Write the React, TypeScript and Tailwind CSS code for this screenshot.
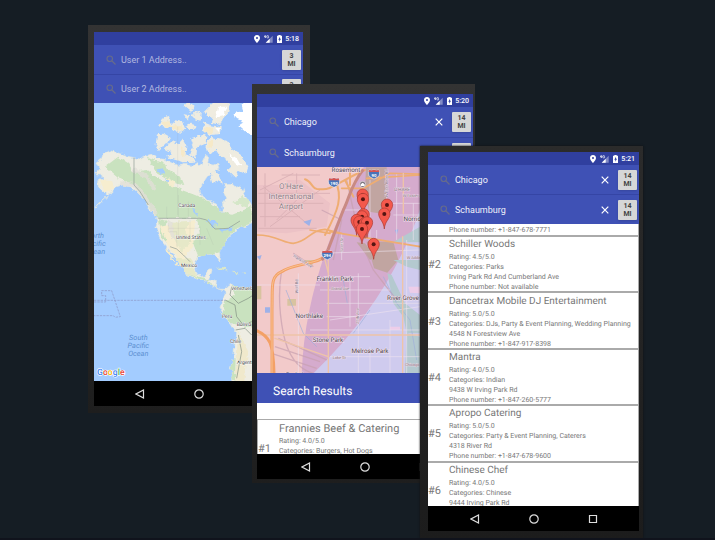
import React from "react";

type Place = { rank: number; name: string; lines: string[] };

const frannies: Place = {
  rank: 1,
  name: "Frannies Beef & Catering",
  lines: ["Rating: 4.0/5.0", "Categories: Burgers, Hot Dogs"],
};

const places: Place[] = [
  {
    rank: 2,
    name: "Schiller Woods",
    lines: ["Rating: 4.5/5.0", "Categories: Parks", "Irving Park Rd And Cumberland Ave", "Phone number: Not available"],
  },
  {
    rank: 3,
    name: "Dancetrax Mobile DJ Entertainment",
    lines: [
      "Rating: 5.0/5.0",
      "Categories: DJs, Party & Event Planning, Wedding Planning",
      "4548 N Forestview Ave",
      "Phone number: +1-847-917-8398",
    ],
  },
  {
    rank: 4,
    name: "Mantra",
    lines: ["Rating: 4.0/5.0", "Categories: Indian", "9438 W Irving Park Rd", "Phone number: +1-847-260-5777"],
  },
  {
    rank: 5,
    name: "Apropo Catering",
    lines: [
      "Rating: 5.0/5.0",
      "Categories: Party & Event Planning, Caterers",
      "4318 River Rd",
      "Phone number: +1-847-678-9600",
    ],
  },
  {
    rank: 6,
    name: "Chinese Chef",
    lines: ["Rating: 4.0/5.0", "Categories: Chinese", "9444 Irving Park Rd"],
  },
];

function StatusBar({ time }: { time: string }) {
  return (
    <div className="flex h-[13px] items-center justify-end bg-[#303f9f] pt-px pr-1 text-[7px] font-medium text-white">
      <svg className="mr-1 h-[8px] w-[6px]" viewBox="0 0 12 16" fill="#fff">
        <path fillRule="evenodd" d="M6 0C2.7 0 0 2.6 0 5.8 0 10 6 16 6 16s6-6 6-10.200C12 2.600 9.300 0 6 0Zm0 3.800a2 2 0 1 1 0 4 2 2 0 0 1 0-4Z" />
      </svg>
      <svg className="mr-1 h-[8px] w-[9px]" viewBox="0 0 27 24">
        <path d="M26 2V23H5Z" fill="#fff" opacity=".4" />
        <path d="M17 11V23H5Z" fill="#fff" />
        <path d="M3 1 1 6H6M5 1V9M14 3C12 0 8 1 8 5s4 5 6 3V5H11" fill="none" stroke="#fff" strokeWidth="2" />
      </svg>
      <svg className="mr-[3px] h-[8px] w-[5px]" viewBox="0 0 15 24">
        <path d="M4 2V0h7v2h4v22H0V2Z" fill="#fff" />
        <path d="M9 5 4 14h3v6l5-9H9Z" fill="#303f9f" />
      </svg>
      <span>{time}</span>
    </div>
  );
}

type SearchRowProps = {
  label: string;
  value?: string;
  placeholder?: string;
  miles: number;
  height: string;
  clearable?: boolean;
};

function SearchRow({ label, value = "", placeholder, miles, height, clearable }: SearchRowProps) {
  return (
    <div className={`flex items-center border-t border-[#3545a5] bg-[#3f51b5] pr-[2px] pl-3 first:border-t-0 ${height}`}>
      <svg className="mr-[5px] size-[10px] shrink-0" viewBox="0 0 20 20" fill="none" stroke="#666b8c" strokeWidth="2.400">
        <circle cx="7.500" cy="7.500" r="5.500" />
        <path d="m12 12 7 7" />
      </svg>
      <input
        type="text"
        aria-label={label}
        defaultValue={value}
        placeholder={placeholder}
        className="h-4 min-w-0 flex-1 bg-transparent text-[9px] text-[#f1f2fa] outline-none placeholder:text-[#b3b9e0]"
      />
      {clearable && (
        <button type="button" aria-label={`Clear ${label}`} className="mr-[9px] shrink-0">
          <svg className="size-2" viewBox="0 0 8 8" stroke="#fff" strokeWidth="1.200">
            <path d="m.7.7 6.600 6.600M7.300.7.7 7.300" />
          </svg>
        </button>
      )}
      <button
        type="button"
        className="h-5 w-[19px] shrink-0 rounded-[1px] bg-[#d6d7d7] text-center text-[7px] leading-[8px] font-bold text-[#444] shadow-sm"
      >
        {miles}
        <br />
        MI
      </button>
    </div>
  );
}

function NavBar() {
  return (
    <nav className="flex h-[25px] items-center justify-center gap-[49px] bg-black">
      <button type="button" aria-label="Back">
        <svg className="size-[10px]" viewBox="0 0 10 10" fill="none" stroke="#ddd" strokeWidth="1.200">
          <path d="M8.500 1v8L1 5Z" />
        </svg>
      </button>
      <button type="button" aria-label="Home">
        <svg className="size-[10px]" viewBox="0 0 10 10" fill="none" stroke="#ddd" strokeWidth="1.200">
          <circle cx="5" cy="5" r="4.200" />
        </svg>
      </button>
      <button type="button" aria-label="Recent apps">
        <svg className="size-[10px]" viewBox="0 0 10 10" fill="none" stroke="#ddd" strokeWidth="1.200">
          <path d="M1.500 1.500h7v7h-7Z" />
        </svg>
      </button>
    </nav>
  );
}

function PlaceItem({ place, border, titleSize }: { place: Place; border: string; titleSize: string }) {
  return (
    <li className={`flex items-center overflow-hidden pt-[2px] ${border}`}>
      <span className="w-[21px] shrink-0 text-[11px] leading-[14px]">#{place.rank}</span>
      <div className="h-[54px] min-w-0 whitespace-nowrap">
        <h3 className={`leading-[14px] ${titleSize}`}>{place.name}</h3>
        {place.lines.map((line) => (
          <p key={line} className="text-[7px] leading-[10px]">
            {line}
          </p>
        ))}
      </div>
    </li>
  );
}

const landMass =
  "M33 205 50 190 55 175 75 167 95 172 120 182 148 188 165 192 190 182 205 180 220 190 245 195 262 205 285 212 300 205 320 215 335 205 345 212 352 200 362 178 370 192 368 208 385 210 398 205 402 222 385 232 370 240 355 262 345 285 350 305 375 318 395 328 403 350 415 350 413 325 425 310 418 290 420 266 440 265 455 280 470 272 480 300 495 320 500 335 530 340 530 372 500 385 480 395 470 391 455 405 445 415 425 435 416 455 403 468 405 485 408 500 400 496 388 478 370 478 350 482 336 488 330 510 335 535 350 545 365 540 372 522 381 522 375 545 370 555 394 560 392 575 400 582 420 583 425 575 440 568 455 578 480 575 505 590 530 590 530 900 440 860 442 830 436 820 445 790 450 750 452 712 440 690 420 665 405 640 415 615 420 600 420 588 408 585 395 580 375 565 350 555 325 548 300 535 292 520 278 500 262 475 250 462 245 458 232 440 220 420 213 395 219 375 214 365 200 350 188 335 182 315 165 300 150 285 130 275 112 270 95 275 80 290 60 310 40 325 30 340 52 318 68 302 55 290 40 275 38 260 55 250 50 240 35 240 30 230 47 222Z";

const arcticIslands = [
  "M218 120 235 118 255 130 245 145 230 150 222 165 214 150Z",
  "M240 160 262 140 285 150 292 135 302 155 300 180 318 185 330 198 295 200 270 192 250 185 262 172Z",
  "M225 90 235 70 252 65 248 80 262 88 250 95Z",
  "M258 98 272 78 290 82 298 100 285 112 270 106Z",
  "M318 132 340 125 362 122 360 145 335 155 332 185 318 178 326 155Z",
  "M368 140 380 128 402 132 425 140 440 165 465 180 488 215 482 235 460 225 450 245 430 225 442 215 425 190 405 180 392 160 378 178 366 165Z",
  "M385 230 402 240 410 262 395 255 383 262 378 245Z",
  "M355 105 360 85 375 92 408 98 405 115 375 118Z",
  "M360 50 380 30 398 15 432 28 428 50 412 70 405 88 380 82 385 62 370 65Z",
  "M300 32 310 22 325 38 318 48Z",
  "M322 65 335 50 348 58 345 75 332 72Z",
  "M305 92 318 85 328 98 312 105Z",
  "M300 60 312 62 308 72Z",
];

const greenAreas = [
  "M60 215 100 185 130 205 145 230 185 225 210 245 250 265 290 285 330 300 375 320 405 345 440 360 500 335 500 385 440 405 370 380 340 368 218 370 185 325 150 270 100 250Z",
  "M185 185 235 205 250 225 285 245 295 270 260 262 215 235Z",
  "M222 372 245 378 240 405 260 430 258 455 228 425Z",
  "M335 370 465 390 425 435 408 470 385 478 340 484 322 440 345 415Z",
  "M300 535 355 548 400 580 365 560Z",
  "M440 570 530 590 530 700 480 695 440 685 412 660 420 620 450 600Z",
  "M440 790 452 790 450 860 436 850Z",
];

function WorldMap() {
  return (
    <svg className="block h-[278px] w-full" viewBox="0 0 209 278" preserveAspectRatio="xMinYMin slice" role="img" aria-label="Map of the Americas">
      <defs>
        <clipPath id="land">
          <path d={landMass} />
        </clipPath>
        <filter id="terrain" x="-10%" y="-10%" width="120%" height="120%" colorInterpolationFilters="sRGB">
          <feTurbulence type="fractalNoise" baseFrequency="0.08" numOctaves="2" seed="4" />
          <feDisplacementMap in="SourceGraphic" scale="14" xChannelSelector="R" yChannelSelector="G" />
        </filter>
      </defs>
      <rect width="209" height="278" fill="#a3ccff" />
      <g transform="translate(-9 -8) scale(.3333)" fontFamily="Roboto, 'Liberation Sans', sans-serif">
        <g filter="url(#terrain)">
          <path d={landMass} fill="#eeede3" stroke="#dfe5df" strokeWidth="2" />
          <g clipPath="url(#land)">
            {greenAreas.map((d) => (
              <path key={d} d={d} fill="#c9e2bf" />
            ))}
            <path d="M45 255 80 258 88 280 60 295ZM240 245 272 262 262 278 245 262ZM225 395 330 375 325 450 290 500 250 455Z" fill="#f6edcf" />
            <path d="M260 380 315 378 300 405 320 440 290 470 270 440ZM270 490 320 490 335 545 300 535Z" fill="#e6e8c8" />
            <path d="M105 265 150 270 200 335 215 360M145 225 185 245 210 285M255 380 265 430" fill="none" stroke="#e1dfd7" strokeWidth="13" opacity=".8" />
            <path d="M458 705 490 770 478 860 450 860 456 780Z" fill="#f0e9cc" />
            <path d="M215 225 230 220 245 232 230 240ZM240 250 254 257 246 265ZM318 340 330 343 340 365 328 355ZM362 375 390 375 400 390 388 385 388 400 378 385ZM402 405 430 400 440 392 438 404 410 413Z" fill="#a3ccff" />
          </g>
          {arcticIslands.map((d) => (
            <path key={d} d={d} fill="#efece0" stroke="#efece0" strokeWidth="4" />
          ))}
          <path d="M225 85 250 75 258 92 290 90 295 108 268 104ZM370 140 382 135 380 160 370 162ZM360 98 380 95 384 114 362 113ZM290 155 300 165 298 185 288 176Z" fill="#f6e9c8" />
          <path d="M445 55 475 48 470 30 515 12 530 130 490 118 460 92 478 80 450 70ZM400 35 428 35 410 65 392 66ZM390 98 407 99 404 113ZM432 175 455 190 470 215 450 205Z" fill="#fff" />
          <path d="M243 455 255 472 270 500 284 515 276 513 258 490 246 470Z" fill="#f2ebcd" />
          <path d="M392 520 415 516 432 528 415 524ZM438 530 460 532 455 537ZM475 532 485 533 480 537Z" fill="#dce8c8" />
          <path d="M445 325 470 300 495 320 490 340Z" fill="#d5e7c8" />
        </g>
        <path d="M147 188V270L165 290 190 330M220 370H345L365 375 390 402 430 400 465 378M255 455 275 462 295 480 315 500" fill="none" stroke="#8e9992" strokeWidth="2" />
        <path d="M245 335V370M280 300V370M310 320V370M250 375V410H275V455M280 380V420M315 375V440M250 400H340M275 430H370M345 395V450M365 400 385 450M278 95V360" fill="none" stroke="#8e9992" strokeWidth="1" opacity=".35" />
        <path d="M27 616H420M27 621H62V602H50V587H80L106 665 90 667 85 662H27" fill="none" stroke="#8b94c2" strokeWidth="2" strokeDasharray="7 3" />
        <path d="M440 575 435 600 460 625 490 610 505 600M420 615 450 630 455 665 475 690 500 680M452 705 480 700 500 720M460 720 470 770 455 850" fill="none" stroke="#7f8c80" strokeWidth="2" />
        <g fill="#444" stroke="#fff" strokeWidth="2" paintOrder="stroke" fontSize="15">
          <text x="280" y="337">Canada</text>
          <text x="273" y="433">United States</text>
          <text x="288" y="515">Mexico</text>
          <text x="438" y="586">Venezuela</text>
          <text x="411" y="670">Peru</text>
          <text x="455" y="694">Bolivia</text>
          <text x="435" y="743">Chile</text>
          <text x="456" y="806">Argentina</text>
        </g>
        <g fill="#5b8fd0" fontSize="22" fontStyle="italic" textAnchor="middle">
          <text x="30" y="430">North</text>
          <text x="30" y="454">Pacific</text>
          <text x="30" y="478">Ocean</text>
          <text x="160" y="735">South</text>
          <text x="160" y="759">Pacific</text>
          <text x="160" y="783">Ocean</text>
        </g>
        <text x="36" y="841" fontSize="26" fontWeight="500" stroke="#fff" strokeWidth="4" paintOrder="stroke">
          <tspan fill="#4285f4">G</tspan>
          <tspan fill="#ea4335">o</tspan>
          <tspan fill="#fbbc05">o</tspan>
          <tspan fill="#4285f4">g</tspan>
          <tspan fill="#34a853">l</tspan>
          <tspan fill="#ea4335">e</tspan>
        </text>
      </g>
    </svg>
  );
}

const pins = [
  [338, 105],
  [339, 118],
  [411, 135],
  [403, 162],
  [341, 164],
  [336, 170],
  [320, 181],
  [328, 186],
  [345, 190],
  [351, 188],
  [336, 207],
  [371, 253],
];

function Shield({ x, y, label }: { x: number; y: number; label: string }) {
  return (
    <g transform={`translate(${x} ${y})`}>
      <path d="M-14-12Q-7-9 0-13 7-9 14-12 24 7 0 15-24 7-14-12Z" fill="#4a73b8" stroke="#fff" strokeWidth="1.500" />
      <path d="M-14-12Q-7-9 0-13 7-9 14-12L16-6H-16Z" fill="#d9534f" />
      <text y="8" textAnchor="middle" fontSize="13" fontWeight="700" fill="#fff">
        {label}
      </text>
    </g>
  );
}

function ChicagoMap() {
  return (
    <svg className="block h-[206px] w-full" viewBox="0 0 216 206" preserveAspectRatio="xMinYMin slice" role="img" aria-label="Map of search area west of Chicago">
      <g transform="translate(-7 -7) scale(.3333)" fontFamily="Roboto, 'Liberation Sans', sans-serif">
        <rect x="0" y="0" width="700" height="700" fill="#f2caca" />
        <path d="M345 15C255 170 160 410 155 650H700V0Z" fill="#d5abcd" />
        <path d="M545 15C500 240 390 450 180 650H700V0Z" fill="#cfcbee" />
        <path d="M20 75H110V60H150L240 130 230 200 110 220 20 215Z" fill="#ecc2c6" />
        {/* parks and forest preserves */}
        <path d="M348 22H410V120L385 160 358 155 345 100ZM350 245H430L445 300 412 338 372 325ZM320 247 345 250 375 290 360 300Z" fill="#bfa49c" opacity=".9" />
        <path d="M20 378H34V418H20ZM112 417H138V437H112ZM155 300H195L185 318 165 310Z" fill="#d8c3a0" />
        <path d="M412 340 425 345 465 430 510 465V520H470L460 470 430 430ZM470 520 510 530V640H465ZM430 300H510V330L470 320ZM430 246 510 200V247Z" fill="#b4c9cf" />
        <path d="M475 380H510V400L480 398ZM420 500H450V510H420Z" fill="#edcde9" />
        {/* airport runways */}
        <path d="M25 100H240M25 130H220M25 205H200M30 90 130 40M40 80 170 190M60 200 210 90M95 45 210 45M80 180 140 120M30 170H150M45 40V200M140 40V100" fill="none" stroke="#dcb2b7" strokeWidth="3" />
        {/* rail yards and streams */}
        <path d="M95 330Q80 420 100 520T190 640M85 535 230 600M75 560 210 605M65 580 200 625M130 280 190 320M290 60 330 240 370 330 440 420M215 150 275 180 250 300" fill="none" stroke="#c79faf" strokeWidth="4" opacity=".7" />
        <path d="M108 390 140 470 160 520 200 560M400 350 440 430 480 480 500 600M280 360 292 430M360 450 310 520" fill="none" stroke="#9eaeda" strokeWidth="2" />
        <path d="M160 185 185 178 178 198ZM45 442H60V458H45ZM20 290 35 285 30 300ZM435 210 445 208 440 225ZM60 100 72 108 64 115Z" fill="#9eb1e8" />
        {/* local streets */}
        <path d="M145 340V640M325 340V640M20 375H210M210 390H420M220 350H360M360 60V240M410 35V130M420 130H510M430 165H510M230 470H330M240 480 510 440M230 430H510M240 590H510M360 560V640M420 480V640M180 510H510M275 220V300M300 350V500M470 240V640M210 280 510 270M380 210V240M280 150H350M440 40V240M490 130V240" fill="none" stroke="#eee3ee" strokeWidth="3" opacity=".6" />
        {/* highways */}
        <g fill="none" stroke="#efad72" strokeLinecap="round">
          <path d="M165 58C190 65 180 90 215 88 245 90 260 68 345 30M255 60C280 110 265 150 225 225M285 60 310 110M300 25V75" strokeWidth="6" />
          <path d="M20 225C80 225 100 250 130 250 175 245 180 210 225 208L275 220M180 210 240 220M275 85H340L420 40 510 42M350 55 510 45M240 215 360 235 510 260" strokeWidth="5" />
          <path d="M460 40V160M458 230V640M20 525H510M75 535 235 590M235 300V640M225 300 235 340" strokeWidth="4" stroke="#eec4a8" />
          <path d="M225 285C220 310 130 310 95 335 60 350 68 380 66 450V640M20 512C60 530 70 550 72 640" strokeWidth="9" stroke="#f3a066" />
          <path d="M225 285C220 310 130 310 95 335 60 350 68 380 66 450V640" strokeWidth="2" stroke="#fbd3a8" />
        </g>
        <path d="M340 28C300 80 300 110 280 150L228 285 215 300" fill="none" stroke="#c98a83" strokeWidth="9" />
        <Shield x={252} y={67} label="190" />
        <Shield x={372} y={42} label="90" />
        <Shield x={232} y={284} label="294" />
        <g fontSize="24" fill="#8f8089" textAnchor="middle" stroke="#f6dede" strokeWidth="3" paintOrder="stroke">
          <text x="123" y="87">O'Hare</text>
          <text x="123" y="117">International</text>
          <text x="123" y="147">Airport</text>
        </g>
        <g fontSize="19" fill="#4e444c" textAnchor="middle" stroke="#f3e4ef" strokeWidth="3" paintOrder="stroke">
          <text x="288" y="36">Rosemont</text>
          <text x="254" y="362">Franklin Park</text>
          <text x="178" y="473">Northlake</text>
          <text x="234" y="547">Stone Park</text>
          <text x="360" y="578">Melrose Park</text>
          <text x="459" y="419">River Grove</text>
          <text x="143" y="650">Berkeley</text>
          <text x="497" y="184">Norridge</text>
        </g>
        <g fontSize="12" fill="#85757f" stroke="#f0dfe9" strokeWidth="2" paintOrder="stroke">
          <text x="432" y="93" fontSize="14">O'HARE</text>
          <text x="243" y="390">Grand Ave</text>
          <text x="248" y="597">Lake St</text>
          <text x="458" y="112">W Foster Ave</text>
          <text x="470" y="297">W Addison St</text>
          <text x="465" y="618">Chicago Ave</text>
          <text transform="translate(128 290) rotate(32)">Franklin Ave</text>
          <text transform="translate(144 400) rotate(-90)">Wolf Rd</text>
          <text transform="translate(328 492) rotate(-90)">25th Ave</text>
          <text transform="translate(278 275) rotate(-90)">Scott St</text>
          <text transform="translate(413 110) rotate(-90)">N East River Rd</text>
        </g>
        <circle cx="338" cy="73" r="9" fill="#746b75" stroke="#eee" strokeWidth="2" />
        <path d="M332 73 338 68 344 73V78H332Z" fill="#fff" />
        {pins.map(([x, y]) => (
          <g key={`${x}-${y}`} transform={`translate(${x} ${y})`}>
            <path d="M0 45C-2 20-17 16-17-1A17 17 0 0 1 17-1C17 16 2 20 0 45Z" fill="#f4584c" stroke="#a93930" strokeWidth="2" />
            <circle r="6" fill="#551512" />
          </g>
        ))}
      </g>
    </svg>
  );
}

export default function App() {
  return (
    <main className="relative min-h-screen overflow-hidden border-b-2 border-[#10131c] bg-[#151d24] font-[Roboto,'Liberation_Sans',sans-serif] [text-rendering:geometricPrecision]">
      <section className="absolute top-[25px] left-[88px] w-[222px] bg-linear-to-b from-[#333] to-[#1e1e1e] pt-[7px] pr-[7px] pb-[7px] pl-[6px]">
        <StatusBar time="5:18" />
        <form>
          <SearchRow label="User 1 address" placeholder="User 1 Address.." miles={3} height="h-[29px]" />
          <SearchRow label="User 2 address" placeholder="User 2 Address.." miles={3} height="h-[29px]" />
        </form>
        <WorldMap />
        <NavBar />
      </section>

      <section className="absolute top-[84px] left-[252px] w-[223px] bg-linear-to-b from-[#333] to-[#1e1e1e] pt-[10px] pr-[2px] pb-1 pl-[5px]">
        <StatusBar time="5:20" />
        <form>
          <SearchRow label="User 1 address" value="Chicago" miles={14} height="h-[30px]" clearable />
          <SearchRow label="User 2 address" value="Schaumburg" miles={14} height="h-[30px]" clearable />
        </form>
        <ChicagoMap />
        <h2 className="flex h-[30px] items-center bg-[#3f51b5] pt-[5px] pl-4 text-[12px] text-white">Search Results</h2>
        <ul className="h-[51px] overflow-hidden bg-white pt-4 text-[#777]">
          <PlaceItem place={frannies} border="border-t border-l border-[#aaa]" titleSize="text-[11px]" />
        </ul>
        <NavBar />
      </section>

      <section className="absolute top-[146px] left-[420px] w-[223px] bg-linear-to-b from-[#2b2b2b] to-[#1c1c1c] pt-[6px] pr-1 pb-[7px] pl-2 shadow-[0_0_2px_#111]">
        <StatusBar time="5:21" />
        <form>
          <SearchRow label="User 1 address" value="Chicago" miles={14} height="h-[29px]" clearable />
          <SearchRow label="User 2 address" value="Schaumburg" miles={14} height="h-[30px]" clearable />
        </form>
        <div className="h-[282px] overflow-hidden bg-white text-[#777]">
          <p className="h-[11px] border-r border-[#aaa] pl-[21px] text-[7px] leading-[12px]">Phone number: +1-847-678-7771</p>
          <ul className="grid h-[282px] grid-rows-5">
            {places.map((place) => (
              <PlaceItem key={place.rank} place={place} border="border-t-2 border-r border-[#aaa]" titleSize="text-[10px]" />
            ))}
          </ul>
        </div>
        <NavBar />
      </section>
    </main>
  );
}
